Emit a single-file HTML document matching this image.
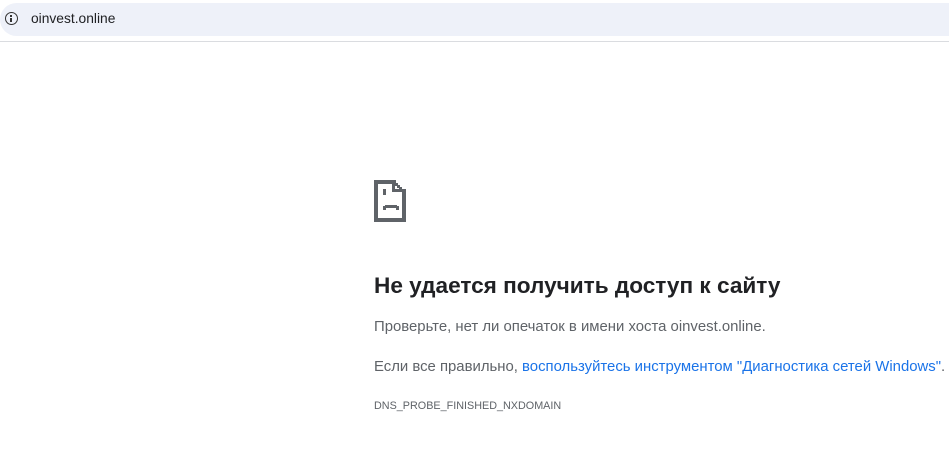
<!DOCTYPE html>
<html><head><meta charset="utf-8"><style>
html,body{margin:0;padding:0;background:#fff;width:949px;height:456px;overflow:hidden;font-family:"Liberation Sans",sans-serif}
.bar{position:absolute;left:0;top:3px;width:949px;height:33px;background:#eef1f9;border-radius:17px 0 0 17px}
.info{position:absolute;left:5px;top:12px;width:13px;height:13px;border:1.6px solid #333;border-radius:50%;box-sizing:border-box}
.info:before{content:"";position:absolute;left:3.9px;top:2px;width:1.8px;height:1.8px;background:#333}
.info:after{content:"";position:absolute;left:3.9px;top:4.6px;width:1.8px;height:4px;background:#333}
.url{position:absolute;left:31px;top:11px;font-size:13.8px;color:#202124}
.line{position:absolute;left:0;top:41px;width:949px;height:1px;background:#dadce0}
h1{position:absolute;left:374px;top:273px;margin:0;font-size:22.6px;font-weight:bold;color:#202124;white-space:nowrap}
.p{position:absolute;left:374px;font-size:14.9px;color:#5f6368;white-space:nowrap}
a{color:#1a73e8;text-decoration:none}
.code{position:absolute;left:374px;top:400px;font-size:10.8px;color:#5f6368}
</style></head><body>
<div class="bar"></div><div class="info"></div><div class="url">oinvest.online</div>
<div class="line"></div>
<svg style="position:absolute;left:0;top:0" width="949" height="456">
<g fill="#5f6368">
<rect x="374" y="180" width="4" height="42"/>
<rect x="374" y="180" width="20" height="4"/>
<rect x="374" y="218" width="32" height="4"/>
<rect x="402" y="192" width="4" height="30"/>
<rect x="392" y="180" width="4" height="4"/>
<rect x="395" y="183" width="3" height="3"/>
<rect x="397" y="185" width="3" height="3"/>
<rect x="399" y="187" width="3" height="3"/>
<rect x="401" y="189" width="3" height="3"/>
<rect x="392" y="180" width="3" height="12"/>
<rect x="392" y="189" width="14" height="3"/>
<rect x="383" y="189" width="3" height="6"/>
<rect x="383" y="206" width="3" height="4"/>
<rect x="385" y="205" width="12" height="3"/>
<rect x="396" y="206" width="3" height="4"/>
</g></svg>
<h1>Не удается получить доступ к сайту</h1>
<div class="p" style="top:319px">Проверьте, нет ли опечаток в имени хоста oinvest.online.</div>
<div class="p" style="top:359px">Если все правильно, <a>воспользуйтесь инструментом "Диагностика сетей Windows"</a>.</div>
<div class="code">DNS_PROBE_FINISHED_NXDOMAIN</div>
</body></html>
